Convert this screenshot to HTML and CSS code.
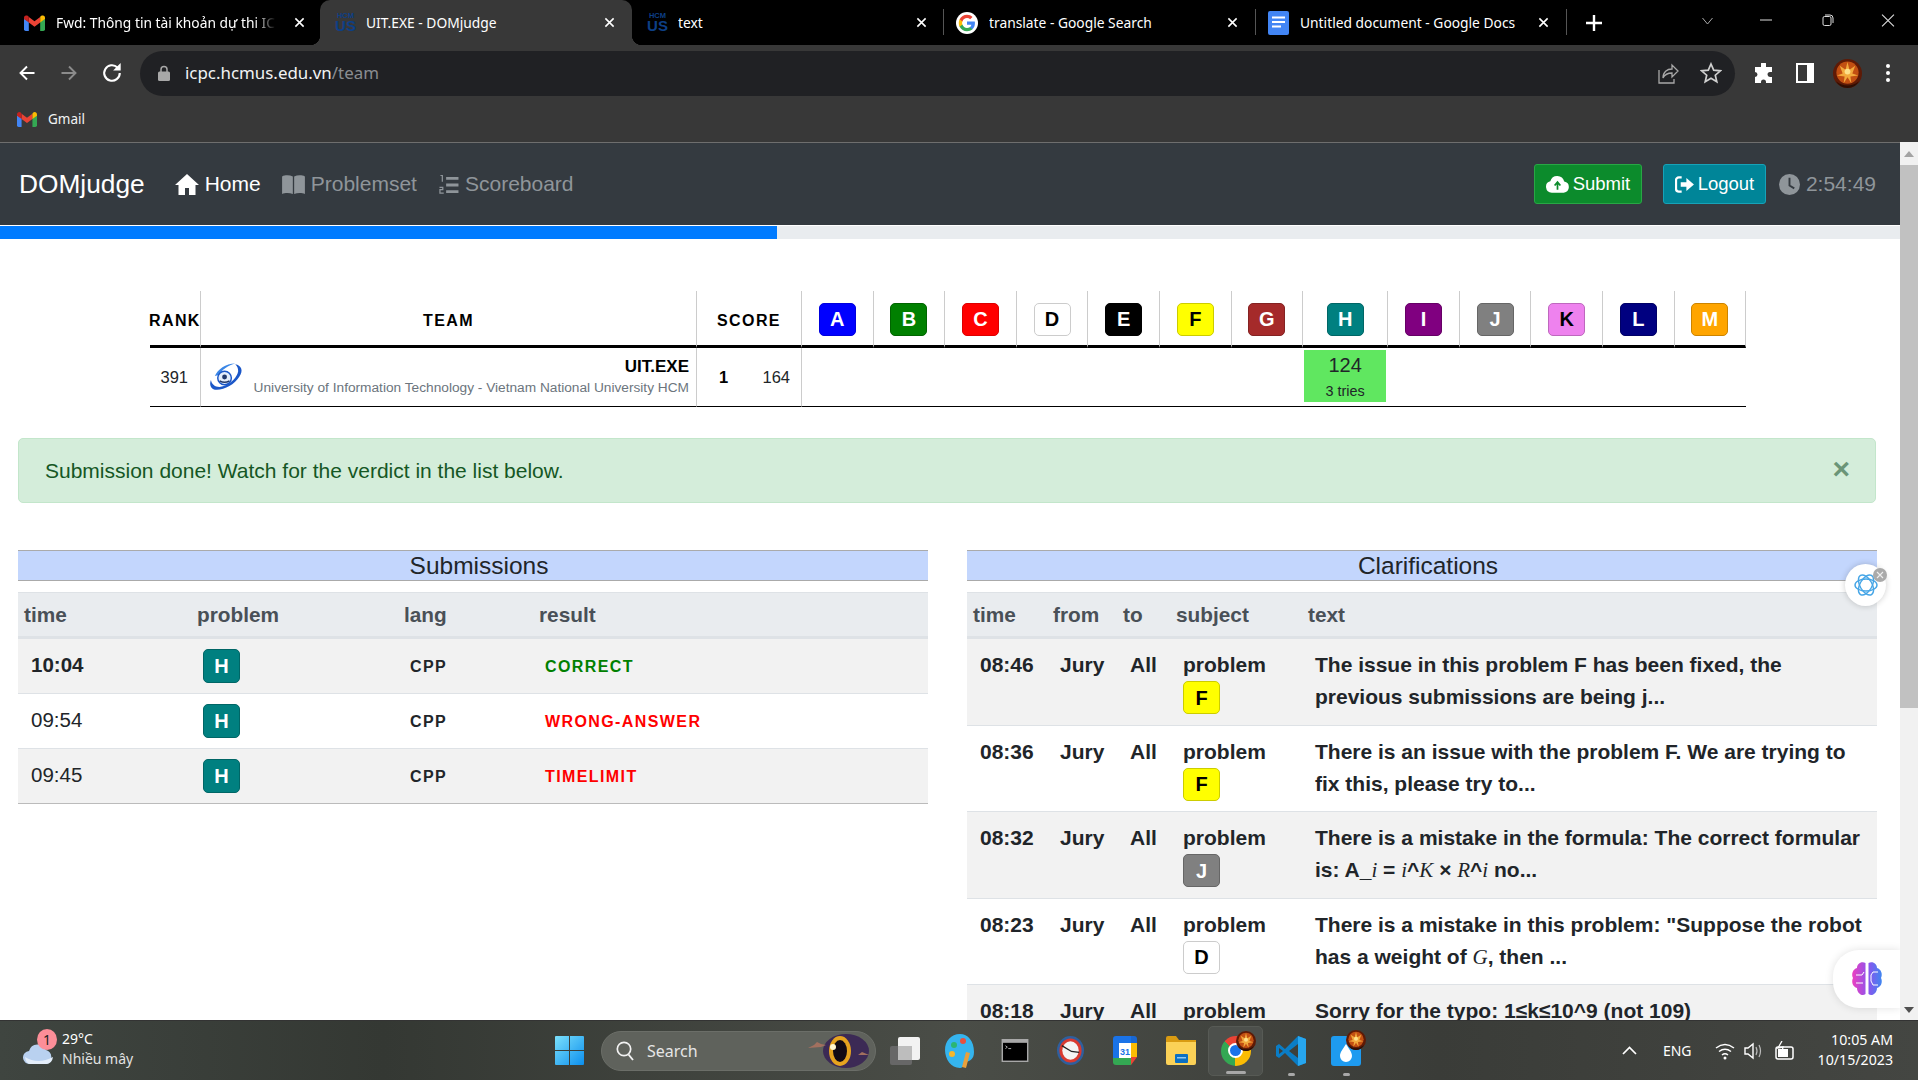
FILE: index.html
```html
<!DOCTYPE html>
<html lang="en">
<head>
  <meta charset="UTF-8">
  <meta name="viewport" content="width=device-width, initial-scale=1.0">
  <title>UIT.EXE - DOMjudge</title>
  <link rel="stylesheet" href="styles.css">
</head>
<body>
  <svg class="defs" width="0" height="0">
    <symbol id="x" viewBox="0 0 12 12"><path d="M1.5 1.5l9 9M10.5 1.5l-9 9" fill="none" stroke="currentColor" stroke-width="1.7"/></symbol>
    <symbol id="gmail" viewBox="0 0 24 18">
      <path fill="#4285f4" d="M0 4v12a2 2 0 0 0 2 2h3.5V7.5z"/>
      <path fill="#34a853" d="M24 4v12a2 2 0 0 1-2 2h-3.5V7.5z"/>
      <path fill="#ea4335" d="M5.5 2v6.5L12 13.3l6.5-4.8V2L12 6.9z"/>
      <path fill="#fbbc04" d="M18.5 2v6.5L24 4.5V3c0-2.6-3-3.8-4.8-2z"/>
      <path fill="#c5221f" d="M5.5 2v6.5L0 4.5V3C0 .4 3-.8 4.8 1z"/>
    </symbol>
    <symbol id="flame" viewBox="0 0 30 30">
      <circle cx="15" cy="15" r="15" fill="#5e1a06"/>
      <circle cx="15" cy="14" r="11.5" fill="#c24f12"/>
      <path d="M15 3l2 8 6-4-3 8 6 2-8 1 1 7-4-6-4 6 1-7-8-1 6-2-3-8 6 4z" fill="#f2a93c"/>
      <circle cx="15" cy="13" r="3" fill="#fde08a"/>
      <path d="M3 23q12 9 24 0-4 7-12 7T3 23z" fill="#2e0e03"/>
    </symbol>
  </svg>

  <div class="screen">
    <div class="tabstrip">
      <div class="tab tab-first">
        <svg class="fav" viewBox="0 0 24 18"><use href="#gmail"/></svg>
        <span class="tab-title">Fwd: Thông tin tài khoản dự thi ICPC</span>
        <svg class="tab-x"><use href="#x"/></svg>
      </div>
      <div class="tab tab-active">
        <span class="hcm"><b>HCM</b><i>US</i></span>
        <span class="tab-title">UIT.EXE - DOMjudge</span>
        <svg class="tab-x"><use href="#x"/></svg>
      </div>
      <div class="tab tab-sep">
        <span class="hcm"><b>HCM</b><i>US</i></span>
        <span class="tab-title">text</span>
        <svg class="tab-x"><use href="#x"/></svg>
      </div>
      <div class="tab tab-sep tab-narrow">
        <span class="fav-round">
          <svg viewBox="0 0 24 24">
            <path fill="#4285f4" d="M22.56 12.25c0-.78-.07-1.53-.2-2.25H12v4.26h5.92c-.26 1.37-1.04 2.53-2.21 3.31v2.77h3.57c2.08-1.92 3.28-4.74 3.28-8.09z"/>
            <path fill="#34a853" d="M12 23c2.97 0 5.46-.98 7.28-2.66l-3.57-2.77c-.98.66-2.23 1.06-3.71 1.06-2.86 0-5.29-1.93-6.16-4.53H2.18v2.84C3.99 20.53 7.7 23 12 23z"/>
            <path fill="#fbbc05" d="M5.84 14.09c-.22-.66-.35-1.36-.35-2.09s.13-1.43.35-2.09V7.07H2.18C1.43 8.55 1 10.22 1 12s.43 3.45 1.18 4.93l3.66-2.84z"/>
            <path fill="#ea4335" d="M12 5.38c1.62 0 3.06.56 4.21 1.64l3.15-3.15C17.45 2.09 14.97 1 12 1 7.7 1 3.99 3.47 2.18 7.07l3.66 2.84c.87-2.6 3.3-4.53 6.16-4.53z"/>
          </svg>
        </span>
        <span class="tab-title">translate - Google Search</span>
        <svg class="tab-x"><use href="#x"/></svg>
      </div>
      <div class="tab tab-sep tab-narrow tab-last">
        <svg class="fav fav-doc" viewBox="0 0 21 24">
          <rect width="21" height="24" rx="2" fill="#4285f4"/>
          <path d="M4 6.5h13M4 11h13M4 15.5h9" stroke="#fff" stroke-width="2"/>
        </svg>
        <span class="tab-title">Untitled document - Google Docs</span>
        <svg class="tab-x"><use href="#x"/></svg>
      </div>
      <svg class="new-tab" viewBox="0 0 16 16"><path d="M8 0v16M0 8h16" stroke="#fff" stroke-width="2.4"/></svg>
      <div class="win-controls">
        <svg viewBox="0 0 12 8" class="wc-chev"><path d="M1 1l5 6 5-6" fill="none" stroke="#aaa"/></svg>
        <svg viewBox="0 0 12 12" class="wc-min"><path d="M0 6h12" stroke="#ddd"/></svg>
        <svg viewBox="0 0 12 12" class="wc-max"><rect x="1" y="2.5" width="8" height="9" rx="1.5" fill="none" stroke="#ddd"/><path d="M3 1h5q3 0 3 3v5" fill="none" stroke="#ddd"/></svg>
        <svg viewBox="0 0 12 12" class="wc-close"><path d="M.5.5l11 11M11.5.5l-11 11" stroke="#ddd"/></svg>
      </div>
    </div>

    <div class="toolbar">
      <svg class="tb-ico tb-back" viewBox="0 0 18 18"><path d="M16.5 9H2.5M9 2.5L2.5 9 9 15.5" fill="none" stroke="#fff" stroke-width="1.9"/></svg>
      <svg class="tb-ico tb-fwd" viewBox="0 0 18 18"><path d="M1.5 9h14M9 2.5L15.5 9 9 15.5" fill="none" stroke="#8b8b8b" stroke-width="1.9"/></svg>
      <svg class="tb-ico tb-reload" viewBox="0 0 18 18"><path d="M16 9a7 7 0 1 1-2.1-5" fill="none" stroke="#fff" stroke-width="1.9"/><path d="M16.8 0v6.8H10z" fill="#fff"/></svg>
      <div class="omnibox">
        <svg class="lock" viewBox="0 0 12 16"><path d="M3 7V4.5a3 3 0 0 1 6 0V7" fill="none" stroke="#a8a8a8" stroke-width="1.5"/><rect y="6.5" width="12" height="9.5" rx="1.5" fill="#a8a8a8"/></svg>
        <span class="url">icpc.hcmus.edu.vn<span class="url-path">/team</span></span>
        <svg class="omni-share" viewBox="0 0 21 22"><path d="M1 8v13h15v-4" fill="none" stroke="#a8a8a8" stroke-width="1.3"/><path d="M5 16c0-6 4-9 9-9V3l6 6-6 6v-4c-4 0-7 1-9 5z" fill="none" stroke="#a8a8a8" stroke-width="1.3"/></svg>
        <svg class="omni-star" viewBox="0 0 22 22"><path d="M11 2l2.7 6.2 6.7.6-5.1 4.4 1.5 6.6L11 16.3l-5.800 3.5 1.5-6.600L1.600 8.800l6.700-.6z" fill="none" stroke="#d0d0d0" stroke-width="1.7"/></svg>
      </div>
      <svg class="tb-right tb-puzzle" viewBox="0 0 21 21"><path d="M8 1a2.500 2.500 0 0 1 5 0v3h6v5h-2a2.500 2.500 0 0 0 0 5h2v6h-6v-1a2.500 2.500 0 0 0-5 0v1H2v-6a2.500 2.500 0 0 0 0-5V4h6z" fill="#fff"/></svg>
      <svg class="tb-right tb-panel" viewBox="0 0 18 20"><rect x="1" y="1" width="16" height="18" fill="#383838" stroke="#fff" stroke-width="2"/><rect x="11" y="1" width="6" height="18" fill="#fff"/></svg>
      <svg class="tb-right tb-avatar" viewBox="0 0 30 30"><use href="#flame"/></svg>
      <svg class="tb-right tb-dots" viewBox="0 0 4 18"><circle cx="2" cy="2" r="2" fill="#fff"/><circle cx="2" cy="9" r="2" fill="#fff"/><circle cx="2" cy="16" r="2" fill="#fff"/></svg>
    </div>

    <div class="bookmarks">
      <svg class="bm-ico" viewBox="0 0 24 18"><use href="#gmail"/></svg>
      <span>Gmail</span>
    </div>

    <div class="viewport">
      <div class="page">
        <nav class="navbar">
          <a class="brand">DOMjudge</a>
          <a class="nav-link active">
            <svg class="ni ni-home" viewBox="0 0 24 24"><path d="M12 2L0 13h3.5v10H10v-7h4v7h6.5V13H24z" fill="currentColor"/></svg>Home
          </a>
          <a class="nav-link">
            <svg class="ni ni-book" viewBox="0 0 24 20"><path d="M0 1.5C3 0 8 0 11.3 1.5V20C8 18.5 3 18.5 0 20zM24 1.5C21 0 16 0 12.7 1.5V20c3.300-1.5 8.300-1.5 11.300 0z" fill="currentColor"/></svg>Problemset
          </a>
          <a class="nav-link">
            <svg class="ni ni-list" viewBox="0 0 21 20"><path d="M8 2h13v3H8zM8 9h13v3H8zM8 16h13v3H8z" fill="currentColor"/><path d="M2 .5h2V7M1 13h3.5v2.5H1.500V19h4" fill="none" stroke="currentColor" stroke-width="1.3"/></svg>Scoreboard
          </a>
          <div class="nav-right">
            <a class="btn btn-submit">
              <svg class="bi bi-cloud" viewBox="0 0 24 18"><path d="M6 18a6 6 0 0 1-1.500-11.800A7.500 7.500 0 0 1 19 6.500 5.800 5.800 0 0 1 18.500 18z" fill="#fff"/><path d="M12 15V8M9 10.500L12 7l3 3.500" fill="none" stroke="#0b8a2b" stroke-width="1.8"/></svg>Submit
            </a>
            <a class="btn btn-logout">
              <svg class="bi bi-out" viewBox="0 0 20 18"><path d="M7 1.500H4a3 3 0 0 0-3 3v9a3 3 0 0 0 3 3h3" fill="none" stroke="#fff" stroke-width="2.4"/><path d="M6 6.500h6V2l8 7-8 7v-4.500H6z" fill="#fff"/></svg>Logout
            </a>
            <span class="timer">
              <svg class="ni ni-clock" viewBox="0 0 22 22"><circle cx="11" cy="11" r="11" fill="currentColor"/><path d="M11 4v8l5 3" fill="none" stroke="#343a40" stroke-width="2"/></svg>2:54:49
            </span>
          </div>
        </nav>

        <div class="progress"><div class="progress-bar" style="width: 40.9%"></div></div>

        <table class="scoreboard">
          <colgroup>
            <col class="c-rank"><col class="c-team"><col class="c-score">
            <col class="c-prob"><col class="c-prob"><col class="c-prob"><col class="c-prob"><col class="c-prob"><col class="c-prob"><col class="c-prob">
            <col class="c-h">
            <col class="c-prob"><col class="c-prob"><col class="c-prob"><col class="c-prob"><col class="c-prob">
          </colgroup>
          <thead>
            <tr>
              <th class="th-rank">RANK</th>
              <th>TEAM</th>
              <th>SCORE</th>
              <th><span class="badge b-a">A</span></th>
              <th><span class="badge b-b">B</span></th>
              <th><span class="badge b-c">C</span></th>
              <th><span class="badge b-d">D</span></th>
              <th><span class="badge b-e">E</span></th>
              <th><span class="badge b-f">F</span></th>
              <th><span class="badge b-g">G</span></th>
              <th><span class="badge b-h">H</span></th>
              <th><span class="badge b-i">I</span></th>
              <th><span class="badge b-j">J</span></th>
              <th><span class="badge b-k">K</span></th>
              <th><span class="badge b-l">L</span></th>
              <th><span class="badge b-m">M</span></th>
            </tr>
          </thead>
          <tbody>
            <tr>
              <td class="td-rank">391</td>
              <td class="td-team">
                <div class="team-wrap">
                  <svg class="uit-logo" viewBox="0 0 36 30">
                    <path d="M27 2c6 1 9 6 4 13-5 8-16 14-25 13-4-1-6-5-4-10 1 6 7 9 14 6 7-3 13-9 14-15 0-3-1-5-3-7z" fill="#1b57c8"/>
                    <path d="M6 14C9 7 17 1 27 1c-7 2-14 6-17 12z" fill="#3a86e6"/>
                    <circle cx="16" cy="16" r="7" fill="#e4edfa" stroke="#1b57c8" stroke-width="1.5"/>
                    <circle cx="16" cy="15" r="2.5" fill="#22386b"/>
                    <path d="M11 19q5 3 10 0" fill="none" stroke="#22386b" stroke-width="1.5"/>
                  </svg>
                  <div class="team-text">
                    <div class="team-name">UIT.EXE</div>
                    <div class="team-affil">University of Information Technology - Vietnam National University HCM</div>
                  </div>
                </div>
              </td>
              <td class="td-score"><div class="score-wrap"><b>1</b><span>164</span></div></td>
              <td></td><td></td><td></td><td></td><td></td><td></td><td></td>
              <td class="td-solved"><div class="solved"><span class="solved-time">124</span><span class="solved-tries">3 tries</span></div></td>
              <td></td><td></td><td></td><td></td><td></td>
            </tr>
          </tbody>
        </table>

        <div class="alert">
          <span>Submission done! Watch for the verdict in the list below.</span>
          <span class="alert-x">×</span>
        </div>

        <div class="columns">
          <section>
            <h3 class="box-title">Submissions</h3>
            <table class="data subs">
              <colgroup><col class="s1"><col class="s2"><col class="s3"><col></colgroup>
              <thead><tr><th>time</th><th>problem</th><th>lang</th><th>result</th></tr></thead>
              <tbody>
                <tr class="odd unseen">
                  <td>10:04</td><td><span class="badge b-h">H</span></td><td class="lang">CPP</td><td class="sol ok">CORRECT</td>
                </tr>
                <tr>
                  <td>09:54</td><td><span class="badge b-h">H</span></td><td class="lang">CPP</td><td class="sol bad">WRONG-ANSWER</td>
                </tr>
                <tr class="odd last">
                  <td>09:45</td><td><span class="badge b-h">H</span></td><td class="lang">CPP</td><td class="sol bad">TIMELIMIT</td>
                </tr>
              </tbody>
            </table>
          </section>

          <section>
            <h3 class="box-title">Clarifications</h3>
            <table class="data clars">
              <colgroup><col class="k1"><col class="k2"><col class="k3"><col class="k4"><col></colgroup>
              <thead><tr><th>time</th><th>from</th><th>to</th><th>subject</th><th>text</th></tr></thead>
              <tbody>
                <tr class="odd">
                  <td>08:46</td><td>Jury</td><td>All</td>
                  <td>problem <span class="badge b-f">F</span></td>
                  <td>The issue in this problem F has been fixed, the previous submissions are being j...</td>
                </tr>
                <tr>
                  <td>08:36</td><td>Jury</td><td>All</td>
                  <td>problem <span class="badge b-f">F</span></td>
                  <td>There is an issue with the problem F. We are trying to fix this, please try to...</td>
                </tr>
                <tr class="odd">
                  <td>08:32</td><td>Jury</td><td>All</td>
                  <td>problem <span class="badge b-j">J</span></td>
                  <td>There is a mistake in the formula: The correct formular is: A_<i class="math">i</i> = <i class="math">i</i>^<i class="math">K</i> × <i class="math">R</i>^<i class="math">i</i> no...</td>
                </tr>
                <tr>
                  <td>08:23</td><td>Jury</td><td>All</td>
                  <td>problem <span class="badge b-d">D</span></td>
                  <td>There is a mistake in this problem: "Suppose the robot has a weight of <i class="math">G</i>, then ...</td>
                </tr>
                <tr class="odd">
                  <td>08:18</td><td>Jury</td><td>All</td>
                  <td>problem</td>
                  <td>Sorry for the typo: 1≤k≤10^9 (not 109)</td>
                </tr>
              </tbody>
            </table>
          </section>
        </div>

        <div class="float-gpt">
          <svg viewBox="0 0 24 24"><g fill="none" stroke="#45a5e6" stroke-width="1.4"><ellipse cx="12" cy="12" rx="11" ry="6"/><ellipse cx="12" cy="12" rx="11" ry="6" transform="rotate(60 12 12)"/><ellipse cx="12" cy="12" rx="11" ry="6" transform="rotate(120 12 12)"/></g></svg>
          <span class="float-gpt-x"><svg><use href="#x"/></svg></span>
        </div>
        <div class="float-brain">
          <svg viewBox="0 0 32 36">
            <defs><linearGradient id="brain" x1="0" x2="1"><stop offset="0" stop-color="#ec3fc0"/><stop offset=".55" stop-color="#8a55ee"/><stop offset="1" stop-color="#3f86f0"/></linearGradient></defs>
            <path d="M14.5 2C10 0 6 3 6 7c-4 1-6 6-4 10-2 4 0 9 4 10 0 5 5 9 8.5 6zM17.5 2C22 0 26 3 26 7c4 1 6 6 4 10 2 4 0 9-4 10 0 5-5 9-8.5 6z" fill="url(#brain)"/>
            <path d="M5 14h6l2-3M5 22h7M27 11h-5l-2 3v6M27 24h-5l-2-4" fill="none" stroke="#fff" stroke-width="1"/>
          </svg>
        </div>
      </div>

      <div class="scrollbar">
        <div class="sb-btn"><span class="arrow-up"></span></div>
        <div class="sb-thumb"></div>
        <div class="sb-rest"></div>
        <div class="sb-btn sb-btn-low"><span class="arrow-down"></span></div>
      </div>
    </div>

    <footer class="taskbar">
      <div class="weather">
        <svg class="cloud" viewBox="0 0 31 22"><path d="M7 22a6.5 6.5 0 0 1-1-13 9 9 0 0 1 17-1 7.5 7.5 0 0 1 1 14z" fill="#b9d1f0"/><path d="M2 15q13 8 28 0-1 7-7 7H7q-4 0-5-7z" fill="#e4eefa"/></svg>
        <span class="weather-dot">1</span>
        <div class="weather-text"><div>29°C</div><div class="weather-sub">Nhiều mây</div></div>
      </div>
      <svg class="winlogo" viewBox="0 0 29 29">
        <defs><linearGradient id="win" x1="0" y1="0" x2="1" y2="1"><stop offset="0" stop-color="#7be0fb"/><stop offset="1" stop-color="#0c8fee"/></linearGradient></defs>
        <path fill="url(#win)" d="M1 0h13v14H0V1q0-1 1-1zM15 0h13q1 0 1 1v13H15zM0 15h14v14H1q-1 0-1-1zM15 15h14v13q0 1-1 1H15z"/>
      </svg>
      <div class="searchbox">
        <svg class="search-ico" viewBox="0 0 18 20"><circle cx="8" cy="8" r="6.7" fill="none" stroke="#f2f2f2" stroke-width="1.7"/><path d="M12.5 13.5L17 19" stroke="#f2f2f2" stroke-width="1.9"/></svg>
        <span>Search</span>
        <svg class="eclipse" viewBox="0 0 62 36">
          <ellipse cx="38" cy="18" rx="23" ry="17" fill="#3c2a55"/>
          <path d="M0 15l6-3 3-3 4 2 5 1-5 2zM50 22l4-3 7 3z" fill="#a2705f"/>
          <ellipse cx="32" cy="18" rx="11" ry="15" fill="#e6a31f"/>
          <ellipse cx="32" cy="18" rx="7" ry="11" fill="#120a14"/>
          <circle cx="25" cy="14" r="3" fill="#fff5d0"/>
        </svg>
      </div>
      <div class="slots">
        <div class="slot">
          <svg viewBox="0 0 30 28" class="ic-task"><rect y="9" width="22" height="19" rx="2" fill="#676767"/><rect x="8" width="22" height="23" rx="2" fill="#f2f2f2"/><rect x="8" y="9" width="14" height="14" fill="#bdbdbd"/></svg>
        </div>
        <div class="slot">
          <svg viewBox="0 0 29 34" class="ic-paint"><path d="M15 0C6 0 0 7 0 16c0 9 6 18 15 18 4 0 3-5 6-6 4-1 8-3 8-10C29 7 23 0 15 0z" fill="#35b4ee"/><circle cx="9" cy="11" r="3" fill="#2bb673"/><circle cx="18" cy="7" r="3" fill="#e6503f"/><circle cx="7" cy="20" r="3" fill="#f5b72c"/><path d="M17 33l4-15 4 1-4 15z" fill="#e8a03c"/></svg>
        </div>
        <div class="slot">
          <svg viewBox="0 0 28 24" class="ic-term"><rect width="28" height="24" fill="#a8a8a8"/><rect x="1.5" y="4" width="25" height="18.5" fill="#000"/><path d="M4 7l2 1.5-2 1.5M7 10h3" stroke="#ddd" stroke-width=".8" fill="none"/></svg>
        </div>
        <div class="slot">
          <svg viewBox="0 0 28 30" class="ic-clock"><ellipse cx="14" cy="15" rx="14" ry="15" fill="#2f5f9e"/><ellipse cx="14" cy="15" rx="11.5" ry="12.5" fill="#d93a30"/><ellipse cx="14" cy="15" rx="8.5" ry="9.5" fill="#f4f4f4"/><path d="M5 10l10 6 8 1" stroke="#222" stroke-width="1.4" fill="none"/></svg>
        </div>
        <div class="slot">
          <svg viewBox="0 0 24 29" class="ic-cal"><path d="M3 0h15v7H6v16H0V3q0-3 3-3z" fill="#1a73e8"/><path d="M18 0h3q3 0 3 3v4h-6z" fill="#1967d2"/><path d="M18 7h6v14h-6z" fill="#fbbc04"/><path d="M0 22h18v7H3q-3 0-3-3z" fill="#34a853"/><path d="M18 21h6l-6 8z" fill="#ea4335"/><rect x="6" y="7" width="12" height="15" fill="#fff"/><text x="12" y="19" class="cal-num">31</text></svg>
        </div>
        <div class="slot">
          <svg viewBox="0 0 30 29" class="ic-folder"><path d="M0 2q0-2 2-2h8l3 4h17v4H0z" fill="#d99b12"/><path d="M0 6h30v21q0 2-2 2H2q-2 0-2-2z" fill="#fbd157"/><rect x="9" y="18" width="13" height="9" rx="1" fill="#0b6fc2"/><rect x="11" y="21" width="9" height="1.5" fill="#8fc9f2"/></svg>
        </div>
        <div class="slot slot-active">
          <span class="chrome-logo"><span class="chrome-core"></span></span>
          <svg class="overlay-flame" viewBox="0 0 30 30"><use href="#flame"/></svg>
          <span class="run-pill run-wide"></span>
        </div>
        <div class="slot">
          <svg viewBox="0 0 30 30" class="ic-code"><path d="M22 0L9 13 3 8 0 10v10l3 2 6-5 13 13 8-3V3z" fill="#0a7dc6"/><path d="M22 0l8 3v24l-8 3z" fill="#27a6ef"/><path d="M22 8v14l-9-7z" fill="#3c403c"/><path d="M3 12l4 3-4 3z" fill="#3c403c"/></svg>
          <span class="run-pill"></span>
        </div>
        <div class="slot">
          <svg viewBox="0 0 30 30" class="ic-drop"><rect width="30" height="30" rx="3" fill="#1e9bf0"/><path d="M15 8c3 5 6 8 6 12a6 6 0 0 1-12 0c0-4 3-7 6-12z" fill="#fff"/></svg>
          <svg class="overlay-flame" viewBox="0 0 30 30"><use href="#flame"/></svg>
          <span class="run-pill"></span>
        </div>
      </div>
      <div class="tray">
        <svg class="tr-chev" viewBox="0 0 15 9"><path d="M1 8l6.5-6.5L14 8" fill="none" stroke="#fff" stroke-width="1.7"/></svg>
        <span class="tr-lang">ENG</span>
        <svg class="tr-wifi" viewBox="0 0 20 18"><g fill="none" stroke="#fff" stroke-width="1.5"><path d="M1 6q9-7 18 0"/><path d="M4 9.5q6-4.5 12 0"/><path d="M7 13q3-2.5 6 0"/></g><circle cx="10" cy="16" r="1.5" fill="#fff"/></svg>
        <svg class="tr-vol" viewBox="0 0 20 18"><path d="M1 6h3l5-4v14l-5-4H1z" fill="none" stroke="#fff" stroke-width="1.4"/><path d="M12 5q2 4 0 8M15 3q3 6 0 12" fill="none" stroke="#bbb" stroke-width="1.2"/></svg>
        <svg class="tr-bat" viewBox="0 0 20 20"><rect x="2" y="6" width="17" height="12" rx="2" fill="none" stroke="#fff" stroke-width="1.5"/><rect x="4" y="8" width="10" height="8" fill="#fff"/><path d="M8 0L4 7l5-1-1 5" fill="none" stroke="#fff" stroke-width="1.3"/></svg>
        <div class="tr-clock"><div>10:05 AM</div><div>10/15/2023</div></div>
      </div>
    </footer>
  </div>
</body>
</html>
```

FILE: styles.css
```css
* {
  box-sizing: border-box;
}
html, body {
  margin: 0;
  height: 100%;
  overflow: hidden;
}
body {
  font-family: "Liberation Sans", Arial, sans-serif;
  color: #212529;
  background-color: #000;
}
.defs {
  position: absolute;
}
.screen {
  height: 1080px;
  display: flex;
  flex-direction: column;
  overflow: hidden;
}

/* chrome tabs */
.tabstrip {
  height: 45px;
  flex: none;
  background-color: #000;
  display: flex;
  align-items: stretch;
  font-family: "Noto Sans", sans-serif;
  font-size: 13.8px;
  color: #fff;
}
.tab {
  position: relative;
  width: 312px;
  display: flex;
  align-items: center;
  padding: 0 17px 0 16px;
}
.tab-first {
  width: 320px;
  padding: 0 15px 0 24px;
}
.tab-active {
  background-color: #383838;
  border-radius: 10px 10px 0 0;
}
.tab-active::before, .tab-active::after {
  content: "";
  position: absolute;
  bottom: 0;
  width: 10px;
  height: 10px;
}
.tab-active::before {
  left: -10px;
  background: radial-gradient(circle at 0 0, #000 10px, #383838 10.5px);
}
.tab-active::after {
  right: -10px;
  background: radial-gradient(circle at 100% 0, #000 10px, #383838 10.5px);
}
.tab-sep::before {
  content: "";
  position: absolute;
  right: 0;
  top: 9px;
  height: 26px;
  width: 1px;
  background-color: #555;
}
.tab-narrow {
  padding-left: 12px;
  padding-right: 18px;
}
.tab-last {
  width: 311px;
}
.tab-title {
  flex: 1;
  min-width: 0;
  white-space: nowrap;
  overflow: hidden;
  margin-left: 11px;
}
.tab-first .tab-title {
  margin-right: 18px;
  -webkit-mask-image: linear-gradient(90deg, #000 90%, transparent);
  mask-image: linear-gradient(90deg, #000 90%, transparent);
}
.tab-x {
  width: 11px;
  height: 11px;
  flex: none;
  color: #fff;
}
.fav {
  width: 21px;
  height: 16px;
  flex: none;
}
.fav-doc {
  height: 24px;
}
.fav-round {
  width: 22px;
  height: 22px;
  flex: none;
  border-radius: 50%;
  background-color: #fff;
  padding: 2px;
  display: flex;
}
.fav-round svg {
  width: 100%;
  height: 100%;
}
.hcm {
  width: 19px;
  flex: none;
  display: flex;
  flex-direction: column;
  align-items: center;
  color: #0d3f86;
  font-family: "Liberation Sans", sans-serif;
  font-weight: bold;
  line-height: 1;
}
.hcm b {
  font-size: 7.5px;
}
.hcm i {
  font-style: normal;
  font-size: 15px;
  margin-top: -1px;
}
.new-tab {
  width: 16px;
  height: 16px;
  margin: 15px 0 0 19px;
}
.win-controls {
  flex: 1;
  position: relative;
}
.win-controls svg {
  position: absolute;
}
.wc-chev {
  left: 99px;
  top: 17px;
  width: 13px;
  height: 8px;
}
.wc-min {
  left: 157px;
  top: 14px;
  width: 14px;
  height: 12px;
}
.wc-max {
  left: 220px;
  top: 13px;
  width: 12px;
  height: 14px;
}
.wc-close {
  left: 279px;
  top: 14px;
  width: 14px;
  height: 13px;
}

/* chrome toolbar */
.toolbar {
  height: 51px;
  flex: none;
  background-color: #383838;
  padding-top: 5px;
  display: flex;
  align-items: center;
}
.tb-ico {
  width: 18px;
  height: 18px;
  flex: none;
}
.tb-back {
  margin-left: 18px;
}
.tb-fwd {
  margin-left: 24px;
}
.tb-reload {
  margin-left: 24px;
  width: 20px;
  height: 20px;
}
.omnibox {
  margin-left: 18px;
  width: 1595px;
  height: 45px;
  border-radius: 23px;
  background-color: #202124;
  display: flex;
  align-items: center;
  padding-left: 18px;
}
.lock {
  width: 12px;
  height: 16px;
}
.url {
  margin: 0 0 2px 15px;
  font-family: "Noto Sans", sans-serif;
  font-size: 16.9px;
  color: #f1f3f4;
  flex: 1;
}
.url-path {
  color: #8a8d91;
}
.omni-share {
  width: 21px;
  height: 22px;
  margin-right: 1px;
}
.omni-star {
  width: 22px;
  height: 22px;
  margin: 0 13px 0 20px;
}
.tb-right {
  flex: none;
}
.tb-puzzle {
  width: 21px;
  height: 21px;
  margin-left: 18px;
}
.tb-panel {
  width: 18px;
  height: 20px;
  margin-left: 22px;
}
.tb-avatar {
  width: 29px;
  height: 29px;
  margin-left: 19px;
}
.tb-dots {
  width: 4px;
  height: 18px;
  margin-left: 24px;
}

/* bookmarks */
.bookmarks {
  height: 46px;
  flex: none;
  background-color: #383838;
  display: flex;
  align-items: center;
  padding-left: 17px;
  font-family: "Noto Sans", sans-serif;
  font-size: 13.5px;
  color: #f1f3f4;
}
.bm-ico {
  width: 20px;
  height: 15px;
  margin-right: 11px;
}

/* page */
.viewport {
  flex: 1;
  min-height: 0;
  display: flex;
  background-color: #fff;
}
.page {
  flex: 1;
  min-width: 0;
  position: relative;
  overflow: hidden;
}
.navbar {
  height: 83px;
  background-color: #343a40;
  border-top: 1px solid #6e6e6e;
  display: flex;
  align-items: center;
  padding-left: 19px;
  font-size: 21px;
  color: #8f959a;
}
.brand {
  font-size: 26.3px;
  color: #fff;
  margin-right: 30px;
}
.nav-link {
  display: flex;
  align-items: center;
  margin-right: 21px;
}
.nav-link.active {
  color: #fff;
}
.ni {
  margin-right: 6px;
  flex: none;
}
.ni-home {
  width: 24px;
  height: 24px;
}
.ni-book {
  width: 23px;
  height: 19px;
}
.ni-list {
  width: 21px;
  height: 19px;
}
.ni-clock {
  width: 21px;
  height: 21px;
}
.nav-right {
  margin-left: auto;
  display: flex;
  align-items: center;
  padding-right: 24px;
}
.btn {
  height: 40px;
  display: flex;
  align-items: center;
  justify-content: center;
  color: #fff;
  font-size: 18.5px;
  border-radius: 3px;
}
.btn-submit {
  width: 108px;
  background-color: #0c8b2c;
  border: 1px solid #28a745;
  margin-right: 21px;
}
.btn-logout {
  width: 103px;
  background-color: #008598;
  border: 1px solid #17a2b8;
  margin-right: 13px;
}
.bi {
  margin-right: 4px;
  flex: none;
}
.bi-cloud {
  width: 23px;
  height: 18px;
}
.bi-out {
  width: 19px;
  height: 17px;
}
.timer {
  display: flex;
  align-items: center;
}
.progress {
  height: 13px;
  margin-top: 1px;
  background-color: #e9ecef;
}
.progress-bar {
  height: 100%;
  background-color: #007bff;
}

/* scoreboard */
.scoreboard {
  table-layout: fixed;
  border-collapse: separate;
  border-spacing: 0;
  width: 1596px;
  margin: 52px 0 0 150px;
}
.c-rank {
  width: 51px;
}
.c-team {
  width: 496px;
}
.c-score {
  width: 105px;
}
.c-prob {
  width: 71.6px;
}
.c-h {
  width: 85px;
}
.scoreboard th {
  height: 57px;
  padding: 6px 0 0;
  font-size: 16px;
  letter-spacing: 1.4px;
  color: #000;
  border-right: 1px solid #ccc;
  border-bottom: 3px solid #000;
  text-align: center;
}
.scoreboard th .badge {
  margin-top: -3px;
}
.scoreboard .th-rank {
  text-align: left;
  white-space: nowrap;
  text-indent: -1px;
}
.scoreboard td {
  height: 59px;
  padding: 0;
  border-bottom: 1px solid #000;
  font-size: 16.5px;
}
.scoreboard .td-rank {
  text-align: right;
  padding-right: 12px;
  border-right: 1px solid #ccc;
}
.scoreboard .td-team {
  border-right: 1px solid #ccc;
}
.scoreboard .td-score {
  border-right: 1px solid #ccc;
}
.team-wrap {
  display: flex;
  align-items: center;
  padding: 0 7px 0 8px;
}
.uit-logo {
  width: 35px;
  height: 30px;
  flex: none;
}
.team-text {
  flex: 1;
  text-align: right;
}
.team-name {
  font-weight: bold;
  font-size: 17px;
  color: #000;
  line-height: 21px;
}
.team-affil {
  font-size: 13.7px;
  color: #6c757d;
  line-height: 21px;
}
.score-wrap {
  display: flex;
  justify-content: space-between;
  padding: 0 11px 0 22px;
}
.score-wrap b {
  color: #000;
}
.solved {
  margin: -3px 0 0 1px;
  width: 82px;
  height: 52px;
  background-color: #60e760;
  display: flex;
  flex-direction: column;
  align-items: center;
  color: #212529;
}
.solved-time {
  font-size: 20px;
  line-height: 30px;
}
.solved-tries {
  font-size: 14.4px;
  line-height: 22px;
}

/* problem badges */
.badge {
  width: 37px;
  height: 33px;
  display: inline-flex;
  align-items: center;
  justify-content: center;
  border: 1px solid;
  border-radius: 5px;
  font-size: 20px;
  font-weight: bold;
  letter-spacing: 0;
  color: #fff;
  vertical-align: top;
}
.b-a { background-color: #00f; border-color: #00d; }
.b-b { background-color: #008000; border-color: #006400; }
.b-c { background-color: #f00; border-color: #d00; }
.b-d { background-color: #fff; border-color: #ccc; color: #000; }
.b-e { background-color: #000; border-color: #000; }
.b-f { background-color: #ff0; border-color: #cc0; color: #000; }
.b-g { background-color: #a52a2a; border-color: #842222; }
.b-h { background-color: #008080; border-color: #006666; }
.b-i { background-color: #800080; border-color: #660066; }
.b-j { background-color: #808080; border-color: #666; }
.b-k { background-color: #ee82ee; border-color: #be68be; color: #000; }
.b-l { background-color: #000080; border-color: #000066; }
.b-m { background-color: #ffa500; border-color: #cc8400; }

/* alert */
.alert {
  margin: 31px 24px 0 18px;
  height: 65px;
  background-color: #d4edda;
  border: 1px solid #c3e6cb;
  border-radius: 5px;
  color: #155724;
  display: flex;
  align-items: center;
  justify-content: space-between;
  padding: 0 25px 0 26px;
  font-size: 21px;
}
.alert-x {
  font-size: 30px;
  font-weight: bold;
  line-height: 1;
  color: #6b9577;
  margin-bottom: 4px;
}

/* the two lists */
.columns {
  display: grid;
  grid-template-columns: 910px 910px;
  column-gap: 39px;
  margin: 47px 0 0 18px;
}
.box-title {
  margin: 0 0 11px;
  height: 31px;
  padding-left: 12px;
  background-color: #c3d6fd;
  border-top: 1px solid #aaa;
  border-bottom: 1px solid #aaa;
  font-size: 24.5px;
  font-weight: normal;
  line-height: 29px;
  text-align: center;
  color: #212529;
}
.data {
  width: 100%;
  table-layout: fixed;
  border-collapse: separate;
  border-spacing: 0;
  font-size: 20.5px;
}
.data th {
  height: 47px;
  padding: 1px 0 0 6px;
  font-size: 20.8px;
  text-align: left;
  color: #495057;
  background-color: #e9ecef;
  border-top: 1px solid #dee2e6;
  border-bottom: 3px solid #dee2e6;
}
.data td {
  padding: 10px 12px 10.5px 13px;
  line-height: 32px;
  vertical-align: top;
  border-bottom: 1px solid #dee2e6;
}
.odd td {
  background-color: #f2f2f2;
}
.s1 { width: 173px; }
.s2 { width: 207px; }
.s3 { width: 135px; }
.k1 { width: 80px; }
.k2 { width: 70px; }
.k3 { width: 53px; }
.k4 { width: 132px; }
.subs td {
  height: 55px;
  padding-right: 0;
  padding-left: 12px;
  padding-bottom: 10px;
}
.subs td:first-child {
  padding-left: 13px;
}
.subs .badge {
  height: 34px;
}
.subs .last td {
  border-bottom-color: #bbb;
}
.unseen td:first-child {
  font-weight: bold;
}
.lang, .sol {
  font-size: 16px;
  font-weight: bold;
  letter-spacing: 1.4px;
}
.subs td.lang, .subs td.sol {
  padding-top: 12px;
}
.ok {
  color: #008000;
}
.bad {
  color: #f00;
}
.clars td {
  font-size: 21px;
  font-weight: bold;
  color: #212529;
}
.clars .badge {
  display: flex;
  font-weight: bold;
  font-size: 20px;
}
.b-f, .b-d, .b-k {
  color: #000;
}
.math {
  font-family: "Liberation Serif", serif;
  font-weight: normal;
}

/* extension widgets */
.float-gpt {
  position: absolute;
  right: 14px;
  top: 422px;
  width: 41px;
  height: 42px;
  border-radius: 50%;
  background-color: #fff;
  box-shadow: 0 0 6px rgba(0, 0, 0, .2);
  display: flex;
  align-items: center;
  justify-content: center;
}
.float-gpt > svg {
  width: 24px;
  height: 24px;
}
.float-gpt-x {
  position: absolute;
  right: -1px;
  top: 4px;
  width: 14px;
  height: 14px;
  border-radius: 50%;
  background-color: #aaa;
  color: #eee;
  display: flex;
  align-items: center;
  justify-content: center;
}
.float-gpt-x svg {
  width: 8px;
  height: 8px;
}
.float-brain {
  position: absolute;
  right: 0;
  top: 808px;
  width: 67px;
  height: 58px;
  border-radius: 26px 0 0 26px;
  background-color: #fff;
  box-shadow: 0 0 8px rgba(0, 0, 0, .12);
  display: flex;
  align-items: center;
  justify-content: center;
}
.float-brain svg {
  width: 32px;
  height: 36px;
}

/* scrollbar */
.scrollbar {
  width: 18px;
  flex: none;
  background-color: #f1f1f1;
  display: flex;
  flex-direction: column;
}
.sb-btn {
  height: 23px;
  display: flex;
  align-items: center;
  justify-content: center;
}
.sb-btn-low {
  height: 20px;
}
.sb-thumb {
  height: 543px;
  background-color: #c1c1c1;
}
.sb-rest {
  flex: 1;
}
.arrow-up, .arrow-down {
  width: 0;
  height: 0;
  border-left: 5px solid transparent;
  border-right: 5px solid transparent;
}
.arrow-up {
  border-bottom: 6px solid #a3a3a3;
}
.arrow-down {
  border-top: 6px solid #505050;
}

/* windows taskbar */
.taskbar {
  height: 60px;
  flex: none;
  display: flex;
  align-items: center;
  color: #fff;
  font-family: "Noto Sans", sans-serif;
  font-size: 14px;
  background: linear-gradient(90deg, #3f4540 0, #343833 20%, #4a4d47 50%, #3a3c38 75%, #444642 100%);
  border-top: 1px solid #333;
}
.weather {
  position: relative;
  width: 555px;
  flex: none;
  display: flex;
  align-items: center;
  padding-left: 23px;
}
.cloud {
  width: 31px;
  height: 22px;
  margin-top: 5px;
  flex: none;
}
.weather-dot {
  position: absolute;
  left: 37px;
  top: -3px;
  width: 20px;
  height: 21px;
  border-radius: 50%;
  background-color: #fc8e98;
  color: #222;
  text-align: center;
  line-height: 21px;
}
.weather-text {
  margin: -3px 0 0 8px;
  line-height: 20px;
}
.weather-sub {
  color: #e2e2e2;
}
.winlogo {
  width: 29px;
  height: 29px;
  flex: none;
}
.searchbox {
  margin-left: 17px;
  width: 275px;
  height: 40px;
  flex: none;
  border-radius: 20px;
  background-color: #5f625c;
  border: 1px solid #6b6e68;
  display: flex;
  align-items: center;
  padding-left: 14px;
  font-size: 16px;
  color: #e6e6e6;
}
.search-ico {
  width: 18px;
  height: 20px;
  margin-right: 13px;
}
.eclipse {
  width: 62px;
  height: 36px;
  margin-left: auto;
  margin-right: 5px;
}
.slots {
  display: flex;
  margin-left: 1px;
  align-items: center;
}
.slot {
  position: relative;
  width: 55.2px;
  height: 50px;
  display: flex;
  align-items: center;
  justify-content: center;
}
.slot-active {
  background-color: #4d504c;
  border: 1px solid #575a55;
  border-radius: 5px;
}
.ic-task { width: 30px; height: 28px; }
.ic-paint { width: 29px; height: 34px; }
.ic-term { width: 28px; height: 23px; }
.ic-clock { width: 27px; height: 29px; }
.ic-cal { width: 24px; height: 29px; }
.ic-folder { width: 30px; height: 29px; }
.ic-code { width: 30px; height: 30px; }
.ic-drop { width: 30px; height: 30px; }
.cal-num {
  font-family: "Liberation Sans", sans-serif;
  font-size: 9px;
  font-weight: bold;
  fill: #1a73e8;
  text-anchor: middle;
}
.chrome-logo {
  width: 30px;
  height: 30px;
  border-radius: 50%;
  background: conic-gradient(from -50deg, #ea4335 0 125deg, #fbbc04 125deg 235deg, #34a853 235deg 360deg);
  display: flex;
  align-items: center;
  justify-content: center;
}
.chrome-core {
  width: 15px;
  height: 15px;
  border-radius: 50%;
  background-color: #1a73e8;
  border: 2px solid #fff;
}
.overlay-flame {
  position: absolute;
  left: 27px;
  top: 4px;
  width: 20px;
  height: 20px;
}
.run-pill {
  position: absolute;
  bottom: 0;
  left: 50%;
  margin-left: -3px;
  width: 7px;
  height: 3px;
  border-radius: 2px;
  background-color: #a8a8a8;
}
.run-wide {
  width: 20px;
  margin-left: -10px;
  bottom: 1px;
}
.tray {
  margin-left: auto;
  display: flex;
  align-items: center;
  padding-right: 25px;
}
.tr-chev {
  width: 15px;
  height: 9px;
}
.tr-lang {
  margin-left: 26px;
}
.tr-wifi {
  width: 20px;
  height: 18px;
  margin-left: 23px;
}
.tr-vol {
  width: 20px;
  height: 18px;
  margin-left: 9px;
}
.tr-bat {
  width: 20px;
  height: 20px;
  margin-left: 10px;
}
.tr-clock {
  margin-left: 24px;
  text-align: right;
  line-height: 20px;
  font-size: 14.2px;
  margin-top: -2px;
}
```
